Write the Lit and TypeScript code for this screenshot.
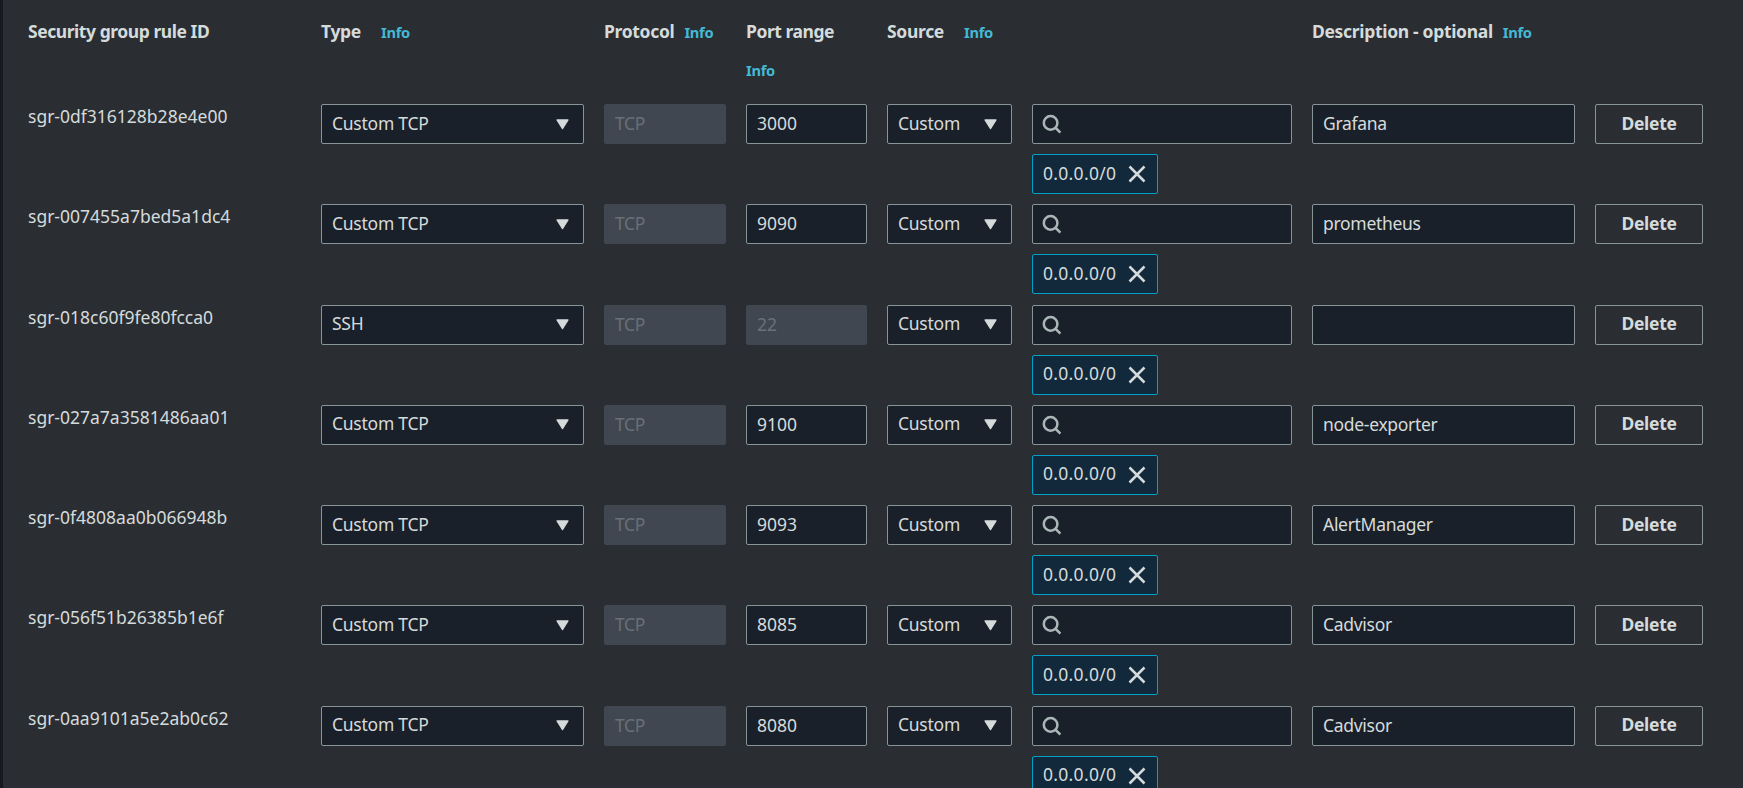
import { LitElement, html, css, svg, nothing } from "lit";
import { customElement, property } from "lit/decorators.js";

interface Rule {
  id: string;
  type: string;
  port: string;
  portLocked?: boolean;
  description: string;
}

const RULES: Rule[] = [
  { id: "sgr-0df316128b28e4e00", type: "Custom TCP", port: "3000", description: "Grafana" },
  { id: "sgr-007455a7bed5a1dc4", type: "Custom TCP", port: "9090", description: "prometheus" },
  { id: "sgr-018c60f9fe80fcca0", type: "SSH", port: "22", portLocked: true, description: "" },
  { id: "sgr-027a7a3581486aa01", type: "Custom TCP", port: "9100", description: "node-exporter" },
  { id: "sgr-0f4808aa0b066948b", type: "Custom TCP", port: "9093", description: "AlertManager" },
  { id: "sgr-056f51b26385b1e6f", type: "Custom TCP", port: "8085", description: "Cadvisor" },
  { id: "sgr-0aa9101a5e2ab0c62", type: "Custom TCP", port: "8080", description: "Cadvisor" },
];

const caret = html`<svg class="caret" width="13" height="11" viewBox="0 0 13 11">
  ${svg`<path d="M1 .9h11L6.5 9.7z" fill="#d5dbdb" stroke="#d5dbdb" stroke-width="1.2" stroke-linejoin="round"/>`}
</svg>`;
const magnifier = html`<svg width="20" height="20" viewBox="0 0 20 20">
  ${svg`<g fill="none" stroke="#aab7b8" stroke-width="2.5"><circle cx="8.6" cy="8.9" r="6.8"/><path d="M13.2 13.5l5.2 5.2"/></g>`}
</svg>`;
const cross = html`<svg width="18" height="18" viewBox="0 0 18 18">
  ${svg`<path d="M1.5 1.5l15 15M16.5 1.5l-15 15" fill="none" stroke="#d5dbdb" stroke-width="2.5"/>`}
</svg>`;

@customElement("rule-row")
class RuleRow extends LitElement {
  @property({ attribute: false }) rule!: Rule;

  static styles = css`
    :host {
      display: grid;
      grid-template-columns: 273px 263px 122px 121px 125px 260px 263px 108px;
      column-gap: 20px;
      align-items: start;
      height: 100.25px;
    }
    .id {
      line-height: 24px;
      white-space: nowrap;
    }
    .box {
      box-sizing: border-box;
      height: 40px;
      border: 1px solid #879596;
      border-radius: 2px;
      background: #1a2029;
      display: flex;
      align-items: center;
      padding: 0 11px;
      white-space: nowrap;
    }
    .select {
      justify-content: space-between;
      padding: 0 14px 3px 10px;
      letter-spacing: -0.25px;
    }
    .caret {
      padding-top: 3px;
    }
    .input {
      padding: 0 10px 2px;
      letter-spacing: -0.3px;
    }
    .number {
      letter-spacing: 0;
    }
    .locked {
      background: #414750;
      border-color: #414750;
      color: #687078;
    }
    .source {
      display: flex;
      flex-direction: column;
      align-items: flex-start;
      gap: 10.2px;
    }
    .search {
      align-self: stretch;
      padding-left: 9px;
    }
    .chip {
      border-color: #00a1c9;
      background: #12293b;
      width: 126px;
      justify-content: space-between;
      padding: 0 11px 0 10px;
    }
    .chip span {
      padding-bottom: 3px;
      letter-spacing: 0.3px;
    }
    .delete {
      justify-content: center;
      background: transparent;
      font-weight: 700;
      padding-bottom: 3px;
      letter-spacing: -0.3px;
    }
  `;

  render() {
    const r = this.rule;
    return html`
      <div class="id">${r.id}</div>
      <div class="box select">${r.type}${caret}</div>
      <div class="box input locked">TCP</div>
      <div class="box input number ${r.portLocked ? "locked" : ""}">${r.port}</div>
      <div class="box select">Custom${caret}</div>
      <div class="source">
        <div class="box search">${magnifier}</div>
        <div class="box chip"><span>0.0.0.0/0</span>${cross}</div>
      </div>
      <div class="box input">${r.description}</div>
      <div class="box delete">Delete</div>
    `;
  }
}

@customElement("app-root")
class AppRoot extends LitElement {
  static styles = css`
    :host {
      display: block;
      box-sizing: border-box;
      height: 788px;
      overflow: hidden;
      background: #2a2e33;
      border-left: 3px solid #16191f;
      padding-left: 25px;
      color: #d5dbdb;
      font-family: "Noto Sans", sans-serif;
      font-size: 17.5px;
    }
    .head {
      display: grid;
      grid-template-columns: 273px 263px 122px 121px 125px 260px 263px 108px;
      column-gap: 20px;
      box-sizing: border-box;
      height: 104.05px;
      padding-top: 12px;
      line-height: 38px;
      font-weight: 700;
    }
    .cell {
      display: flex;
      flex-wrap: wrap;
      align-content: flex-start;
      column-gap: 10px;
      white-space: nowrap;
      letter-spacing: -0.32px;
    }
    .tight {
      letter-spacing: -0.45px;
    }
    .wide {
      column-gap: 20px;
    }
    .info {
      color: #44b9d6;
      font-size: 14.7px;
      letter-spacing: -0.3px;
      padding-top: 1px;
      margin-bottom: -1px;
    }
  `;

  private head(label: string, info = true, variant = "") {
    return html`<div class="cell ${variant}">
      <span>${label}</span>${info ? html`<span class="info">Info</span>` : nothing}
    </div>`;
  }

  render() {
    return html`
      <div class="head">
        ${this.head("Security group rule ID", false, "tight")} ${this.head("Type", true, "wide")}
        ${this.head("Protocol")} ${this.head("Port range", true, "tight")}
        ${this.head("Source", true, "wide")}
        <div></div>
        ${this.head("Description - optional")}
      </div>
      ${RULES.map((r) => html`<rule-row .rule=${r}></rule-row>`)}
    `;
  }
}
